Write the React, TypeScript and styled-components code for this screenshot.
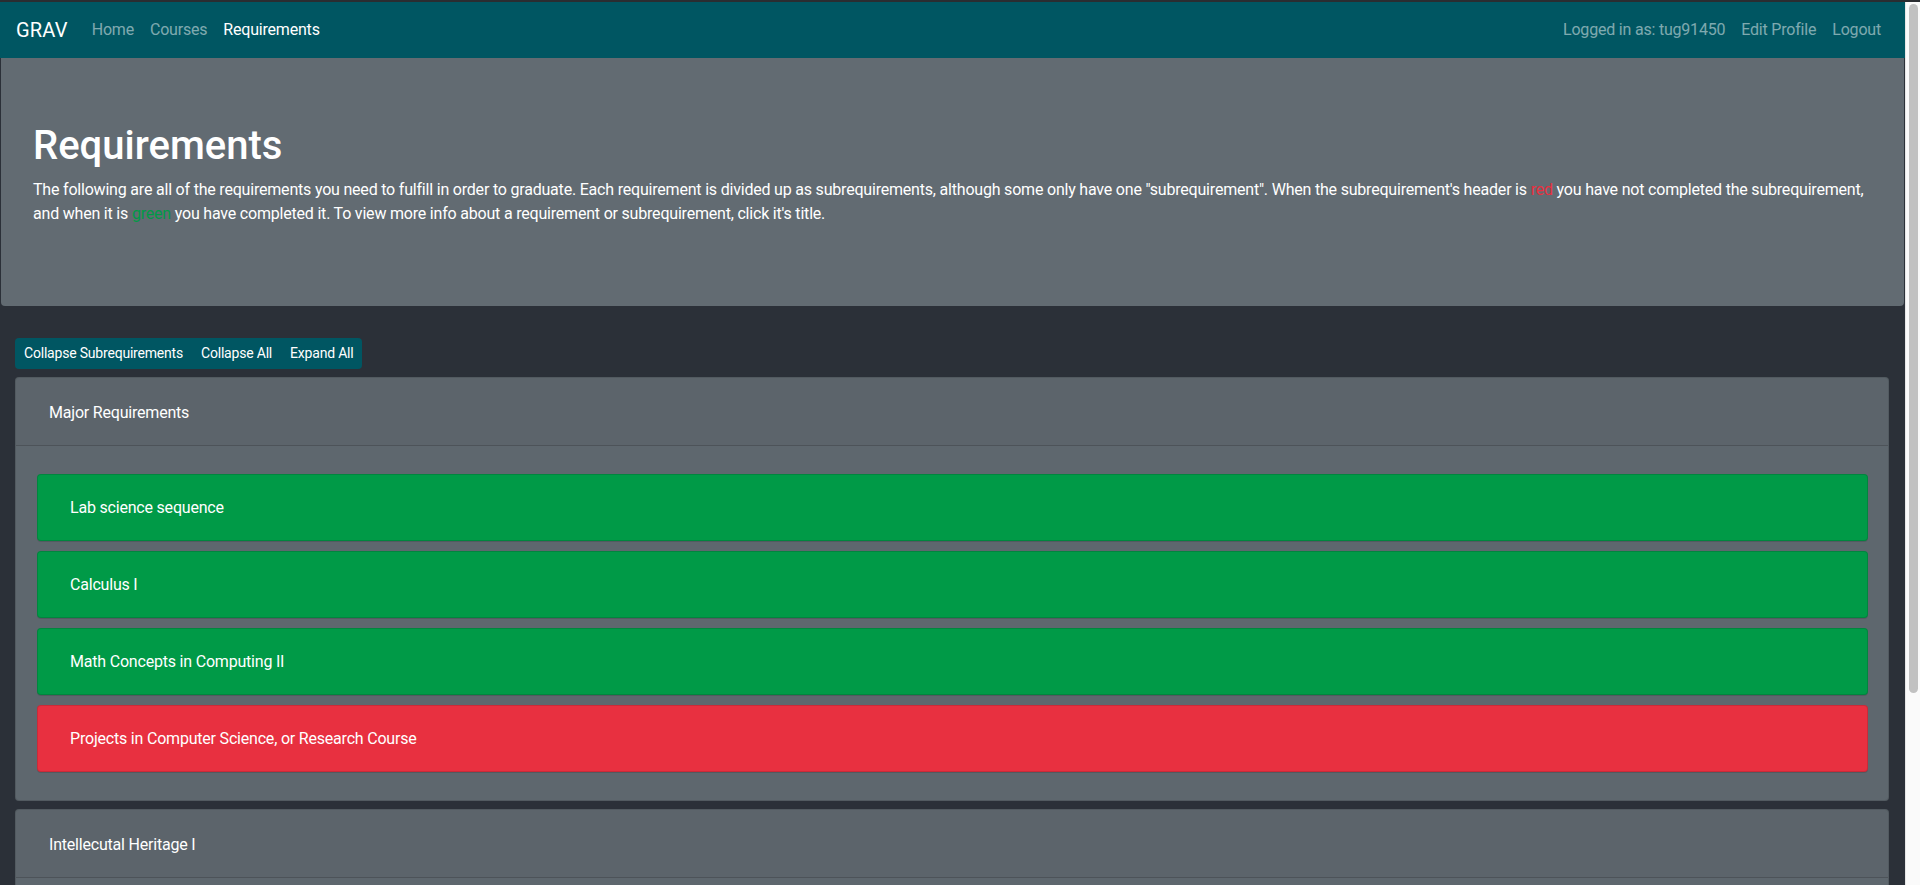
import React from "react";
import styled, { createGlobalStyle } from "styled-components";

const GlobalStyle = createGlobalStyle`
  html, body {
    margin: 0;
    padding: 0;
    overflow: hidden;
  }
  body {
    background: #2b3038;
    color: #ffffff;
    font-family: Roboto, "Noto Sans", "Liberation Sans", sans-serif;
    font-size: 16px;
    line-height: 24px;
    letter-spacing: -0.2px;
  }
  * { box-sizing: border-box; }
`;

const Shell = styled.div`
  display: flex;
  height: 885px;
  overflow: hidden;
  border-top: 2px solid #2a2d31;
`;

const Viewport = styled.div`
  flex: 1;
  min-width: 0;
  overflow: hidden;
`;

const ScrollTrack = styled.div`
  width: 15px;
  flex: none;
  display: flex;
  flex-direction: column;
  background: #fafafa;
  border-left: 1px solid #e6e6e6;
  padding: 2px 2px 0 3px;
`;

const ScrollThumb = styled.div`
  height: 689px;
  background: #c1c1c1;
  border-radius: 5px;
`;

const Navbar = styled.nav`
  display: flex;
  align-items: center;
  height: 56px;
  padding: 0 16px;
  background: #005662;
`;

const Brand = styled.a`
  font-size: 20px;
  line-height: 30px;
  color: #ffffff;
  margin-right: 16px;
  letter-spacing: 0.2px;
  text-decoration: none;
`;

const NavGroup = styled.div<{ $right?: boolean }>`
  display: flex;
  align-items: center;
  margin-left: ${(p) => (p.$right ? "auto" : "0")};
`;

const NavLink = styled.a<{ $active?: boolean }>`
  padding: 8px;
  color: ${(p) => (p.$active ? "#ffffff" : "rgba(255,255,255,0.5)")};
  text-decoration: none;
  font-size: 16px;
  line-height: 24px;
`;

const NavText = styled.span`
  padding: 8px 0;
  margin-right: 8px;
  color: rgba(255, 255, 255, 0.5);
`;

const Jumbotron = styled.section`
  margin: 0 1px 32px;
  padding: 64px 32px;
  background: #626b72;
  border-radius: 0 0 4px 4px;
`;

const Title = styled.h1`
  margin: 0 0 8px;
  font-size: 40px;
  line-height: 48px;
  font-weight: 500;
  letter-spacing: 0;
`;

const Lead = styled.p`
  margin: 0 0 16px;
  font-size: 16px;
  line-height: 24px;
`;

const Hl = styled.span<{ $tone: "red" | "green" }>`
  color: ${(p) => (p.$tone === "red" ? "#e83040" : "#009a47")};
`;

const Container = styled.main`
  padding: 0 16px 0 15px;
`;

const ButtonGroup = styled.div`
  display: inline-flex;
  background: #005662;
  border-radius: 4px;
  margin-bottom: 8px;
`;

const GroupButton = styled.button`
  background: transparent;
  border: 1px solid transparent;
  color: #ffffff;
  font-family: inherit;
  letter-spacing: inherit;
  font-size: 14px;
  line-height: 21px;
  padding: 4px 8px;
  cursor: pointer;
`;

const Card = styled.div`
  background: #5e676e;
  border: 1px solid rgba(0, 0, 0, 0.125);
  border-radius: 4px;
  margin-bottom: 8px;
`;

const CardHeader = styled.div`
  height: 68px;
  display: flex;
  align-items: center;
  padding: 2px 0 0 33px;
  background: rgba(0, 0, 0, 0.02);
  border-bottom: 1px solid rgba(0, 0, 0, 0.16);
  font-size: 16px;
`;

const CardBody = styled.div`
  padding: 28px 20px 18px 21px;
`;

const SubCard = styled.div<{ $done: boolean }>`
  height: 67px;
  display: flex;
  align-items: center;
  padding: 1px 0 0 32px;
  margin-bottom: 10px;
  background: ${(p) => (p.$done ? "#009a47" : "#e83040")};
  border: 1px solid rgba(0, 0, 0, 0.125);
  border-radius: 4px;
  box-shadow: 0 1px 0 rgba(0, 0, 0, 0.12);
  font-size: 16px;
`;

const requirements = [
  {
    name: "Major Requirements",
    subs: [
      { name: "Lab science sequence", done: true },
      { name: "Calculus I", done: true },
      { name: "Math Concepts in Computing II", done: true },
      { name: "Projects in Computer Science, or Research Course", done: false },
    ],
  },
  {
    name: "Intellecutal Heritage I",
    subs: [
      { name: "Intellectual Heritage I", done: true },
      { name: "Intellectual Heritage II", done: true },
    ],
  },
];

export default function App() {
  return (
    <>
      <GlobalStyle />
      <Shell>
        <Viewport>
          <Navbar>
            <Brand>GRAV</Brand>
            <NavGroup>
              <NavLink>Home</NavLink>
              <NavLink>Courses</NavLink>
              <NavLink $active>Requirements</NavLink>
            </NavGroup>
            <NavGroup $right>
              <NavText>Logged in as: tug91450</NavText>
              <NavLink>Edit Profile</NavLink>
              <NavLink>Logout</NavLink>
            </NavGroup>
          </Navbar>
          <Jumbotron>
            <Title>Requirements</Title>
            <Lead>
              The following are all of the requirements you need to fulfill in order to graduate.
              Each requirement is divided up as subrequirements, although some only have one
              "subrequirement". When the subrequirement's header is <Hl $tone="red">red</Hl> you
              have not completed the subrequirement, and when it is{" "}
              <Hl $tone="green">green</Hl> you have completed it. To view more info about a
              requirement or subrequirement, click it's title.
            </Lead>
          </Jumbotron>
          <Container>
            <ButtonGroup>
              <GroupButton>Collapse Subrequirements</GroupButton>
              <GroupButton>Collapse All</GroupButton>
              <GroupButton>Expand All</GroupButton>
            </ButtonGroup>
            {requirements.map((r) => (
              <Card key={r.name}>
                <CardHeader>{r.name}</CardHeader>
                <CardBody>
                  {r.subs.map((s) => (
                    <SubCard key={s.name} $done={s.done}>
                      {s.name}
                    </SubCard>
                  ))}
                </CardBody>
              </Card>
            ))}
          </Container>
        </Viewport>
        <ScrollTrack>
          <ScrollThumb />
        </ScrollTrack>
      </Shell>
    </>
  );
}
